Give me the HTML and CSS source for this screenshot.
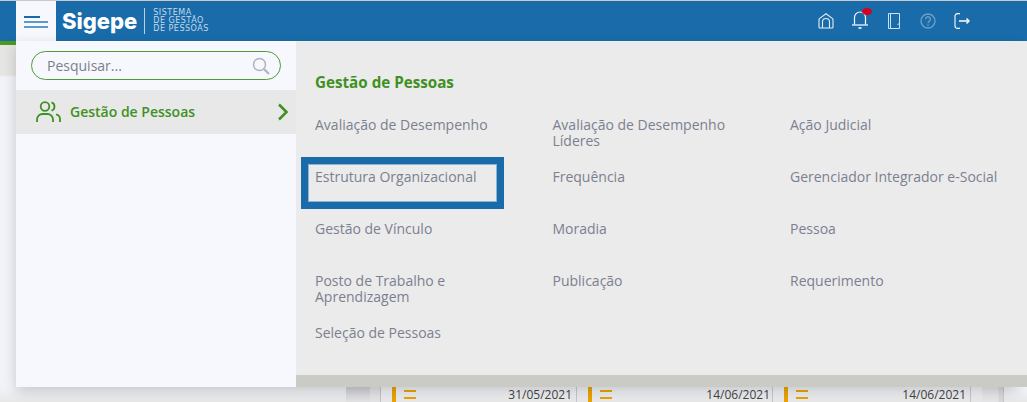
FILE: index.html
```html
<!DOCTYPE html>
<html lang="en">
<head>
    <meta charset="UTF-8">
    <title>Sigepe</title>
    <link rel="stylesheet" href="styles.css">
</head>
<body>
    <div class="page">
        <header class="topbar">
            <div class="brand">
                <span class="brand-name">Sigepe</span>
                <span class="brand-sub">SISTEMA<br>DE GESTÃO<br>DE PESSOAS</span>
            </div>
            <nav class="top-icons">
                <svg width="16" height="16" viewBox="0 0 16 16" fill="none" stroke="#e4eef6" stroke-width="1.100">
                    <path d="M1 14V6.800c0-.6.200-1 .7-1.400L8 .8l6.300 4.600c.5.400.7.800.7 1.400V14c0 .6-.4 1-1 1H2c-.6 0-1-.4-1-1z"/>
                    <path d="M4.500 15V9a3.500 3.500 0 0 1 7 0v6"/>
                </svg>
                <span class="bell">
                    <svg width="16" height="19" viewBox="0 0 16 19" fill="none" stroke="#fff" stroke-width="1.200">
                        <path d="M2.500 14.500V7.500a5.500 5.500 0 0 1 11 0v7"/>
                        <path d="M0 15h16"/>
                        <path d="M6.500 18h3" stroke-width="1.600"/>
                    </svg>
                    <i class="bell-dot"></i>
                </span>
                <svg class="book" width="12" height="16" viewBox="0 0 12 16" fill="none" stroke="#cfe0ee" stroke-width="1">
                    <path d="M.5.500h11v15H.5z"/>
                    <path d="M2.500.500v15M11.500 10.500l-2 1"/>
                </svg>
                <svg width="16" height="16" viewBox="0 0 16 16" fill="none" stroke="#6f9fc6" stroke-width="1.400">
                    <circle cx="8" cy="8" r="7"/>
                    <path d="M5.600 6.200a2.400 2.400 0 1 1 3.700 2C8.400 8.800 8 9.200 8 10.200"/>
                    <path d="M8 11.300v1.500"/>
                </svg>
                <svg width="16" height="16" viewBox="0 0 16 16" fill="none" stroke="#fff" stroke-width="1.100">
                    <path d="M6 .6H3.500A2.500 2.500 0 0 0 1 3.100v9.800a2.500 2.500 0 0 0 2.500 2.500H6"/>
                    <path d="M5 8h10" stroke-width="1.500"/>
                    <path d="M12.500 5.500 15 8l-2.500 2.500" stroke-width="1.500"/>
                </svg>
            </nav>
        </header>
        <div class="green-line"></div>

        <div class="backdrop">
            <div class="cards-row">
                <div class="gutter"></div>
                <div class="panel-edge"></div>
                <div class="card"><span class="mark"></span><span class="date">31/05/2021</span></div>
                <div class="card"><span class="mark"></span><span class="date">14/06/2021</span></div>
                <div class="card"><span class="mark"></span><span class="date">14/06/2021</span></div>
                <div class="row-end"></div>
            </div>
        </div>

        <button class="burger"><span></span><span></span><span></span></button>

        <div class="menu">
            <aside class="menu-side">
                <div class="search">
                    <span class="search-text">Pesquisar...</span>
                    <svg width="18" height="18" viewBox="0 0 18 18" fill="none" stroke="#aab4c4" stroke-width="1.500">
                        <circle cx="7.500" cy="7.500" r="6"/>
                        <path d="M12 12l5 5" stroke-width="2.200"/>
                    </svg>
                </div>
                <div class="side-item">
                    <svg width="25" height="22" viewBox="0 0 25 22" fill="none" stroke="#3f9123" stroke-width="1.800">
                        <circle cx="9" cy="5.500" r="4.300"/>
                        <path d="M1 21v-2.500A5.500 5.500 0 0 1 6.500 13h5a5.500 5.500 0 0 1 5.500 5.500V21"/>
                        <path d="M15.500 1.400a4.300 4.300 0 0 1 0 8.200"/>
                        <path d="M20 13.300a5 5 0 0 1 4 5V21"/>
                    </svg>
                    <span class="side-label">Gestão de Pessoas</span>
                    <svg class="side-arrow" width="12" height="18" viewBox="0 0 12 18" fill="none" stroke="#3f9123" stroke-width="2.600">
                        <path d="M2 1.500 9.500 9 2 16.500"/>
                    </svg>
                </div>
            </aside>
            <section class="menu-main">
                <div class="menu-body">
                    <h2>Gestão de Pessoas</h2>
                    <ul class="links">
                        <li>Avaliação de Desempenho</li>
                        <li class="narrow">Avaliação de Desempenho Líderes</li>
                        <li>Ação Judicial</li>
                        <li class="marked">Estrutura Organizacional</li>
                        <li>Frequência</li>
                        <li>Gerenciador Integrador e-Social</li>
                        <li>Gestão de Vínculo</li>
                        <li>Moradia</li>
                        <li>Pessoa</li>
                        <li class="narrow">Posto de Trabalho e Aprendizagem</li>
                        <li>Publicação</li>
                        <li>Requerimento</li>
                        <li>Seleção de Pessoas</li>
                    </ul>
                </div>
                <div class="menu-foot"></div>
            </section>
        </div>
    </div>
</body>
</html>
```

FILE: styles.css
```css
body {
    margin: 0;
    font-family: "Open Sans", "Liberation Sans", sans-serif;
}

.page {
    position: relative;
    width: 1027px;
    height: 402px;
    overflow: hidden;
    background-color: #e9e9eb;
}

.topbar {
    display: flex;
    align-items: center;
    height: 40px;
    padding-left: 62px;
    padding-right: 57px;
    background-color: #196ca9;
    color: white;
    border-top: 1px solid #c9c9c9;
}

.brand {
    display: flex;
    align-items: center;
}

.brand-name {
    font-family: Inter, "Liberation Sans", sans-serif;
    font-size: 22px;
    font-weight: 800;
    padding-right: 7px;
    border-right: 1px solid #b9d2e6;
    line-height: 26px;
}

.brand-sub {
    margin-left: 8px;
    font-family: "DejaVu Sans", sans-serif;
    font-size: 8px;
    letter-spacing: 0.5px;
    line-height: 8px;
    color: #c4d9ea;
}

.top-icons {
    display: flex;
    align-items: center;
    gap: 18px;
    margin-left: auto;
}

.book {
    margin: 0 2px;
}

.bell {
    position: relative;
    display: flex;
    margin-top: -3px;
}

.bell-dot {
    position: absolute;
    top: -2px;
    right: -4px;
    width: 10px;
    height: 7px;
    border-radius: 50%;
    background-color: #d8001f;
}

.green-line {
    height: 4px;
    background: linear-gradient(90deg, #4c9a22 0%, #6db52f 50%, #a2d94e 100%);
}

.backdrop {
    height: 357px;
    background: linear-gradient(180deg, #e5e5e3 0, #e5e5e3 30px, #f1f3f8 32px, #f1f3f8 342px, #e8e8e8 357px);
}

.cards-row {
    display: flex;
    height: 15px;
    padding-top: 342px;
    padding-left: 346px;
}

.gutter {
    width: 24px;
    background: linear-gradient(180deg, #cfd0d4, #e3e3e5);
}

.panel-edge {
    width: 10px;
    margin-right: 11px;
    border-right: 1px solid #c4c4c6;
    background-color: #e4e4e6;
}

.card {
    display: flex;
    justify-content: space-between;
    flex: none;
    width: 185px;
    margin-right: 11px;
    box-sizing: border-box;
    padding-right: 4px;
    border-left: 4px solid #eba300;
    border-right: 1px solid #c8c8ca;
    font-size: 12px;
    color: #444;
    line-height: 14px;
}

.card:nth-child(4) {
    padding-right: 2px;
}

.card:nth-child(5) {
    width: 187px;
}

.date {
    padding-top: 1px;
}

.mark {
    width: 12px;
    height: 9px;
    margin-left: 8px;
    margin-top: 3px;
    border-top: 2px solid #eba300;
    border-bottom: 2px solid #eba300;
    box-sizing: border-box;
}

.row-end {
    flex: none;
    width: 21px;
    border-right: 1px solid #c8c8ca;
    background: linear-gradient(90deg, #e6e6e8 0, #e6e6e8 16px, #d8d8da 17px);
}

.burger {
    position: absolute;
    top: 1px;
    left: 16px;
    display: flex;
    flex-direction: column;
    gap: 3px;
    width: 40px;
    height: 40px;
    padding: 15px 0 0 8px;
    border: none;
    background-color: #f6f8fd;
}

.burger span {
    display: block;
    width: 24px;
    height: 2px;
    background-color: #5e9ac7;
}

.burger span:first-child {
    width: 16px;
    background-color: #196ca9;
}

.menu {
    position: absolute;
    top: 41px;
    left: 16px;
    display: flex;
    width: 1000px;
    height: 346px;
    box-shadow: 0 4px 12px rgba(0, 0, 0, 0.18);
}

.menu-side {
    flex: none;
    width: 280px;
    background-color: #f6f8fd;
}

.search {
    display: flex;
    align-items: center;
    justify-content: space-between;
    box-sizing: border-box;
    height: 29px;
    margin: 10px 15px 0;
    padding: 0 10px 0 15px;
    border: 1px solid #4f9a35;
    border-radius: 15px;
}

.search-text {
    font-size: 14px;
    color: #7b7f8c;
}

.side-item {
    display: flex;
    align-items: center;
    height: 44px;
    margin-top: 10px;
    padding: 0 7px 0 20px;
    background-color: #e8e8e8;
}

.side-label {
    margin-left: 9px;
    margin-top: -2px;
    font-size: 14px;
    font-weight: 600;
    color: #3f9123;
}

.side-arrow {
    margin-left: auto;
}

.menu-main {
    display: flex;
    flex-direction: column;
    flex: 1;
    background-color: #ebebeb;
}

.menu-body {
    flex: 1;
    min-height: 0;
    padding: 31px 0 0 19px;
}

.menu-body h2 {
    margin: 0 0 24px;
    font-size: 15.200px;
    line-height: 21px;
    font-weight: 700;
    color: #3f9123;
}

.links {
    display: grid;
    grid-template-columns: repeat(3, 237.500px);
    grid-auto-rows: 52px;
    margin: 0;
    padding: 0;
    list-style: none;
    font-size: 14px;
    line-height: 16px;
    color: #7b8090;
}

.narrow {
    max-width: 200px;
}

.marked {
    position: relative;
}

/* highlight box sits on top of the row */
.marked::after {
    content: "";
    position: absolute;
    top: -5px;
    left: -7px;
    width: 189px;
    height: 38px;
    border: 1px solid #8fb4d3;
    outline: 7px solid #196ca9;
    box-sizing: border-box;
}

.menu-foot {
    flex: none;
    height: 12px;
    background-color: #cbcbc6;
}
```
